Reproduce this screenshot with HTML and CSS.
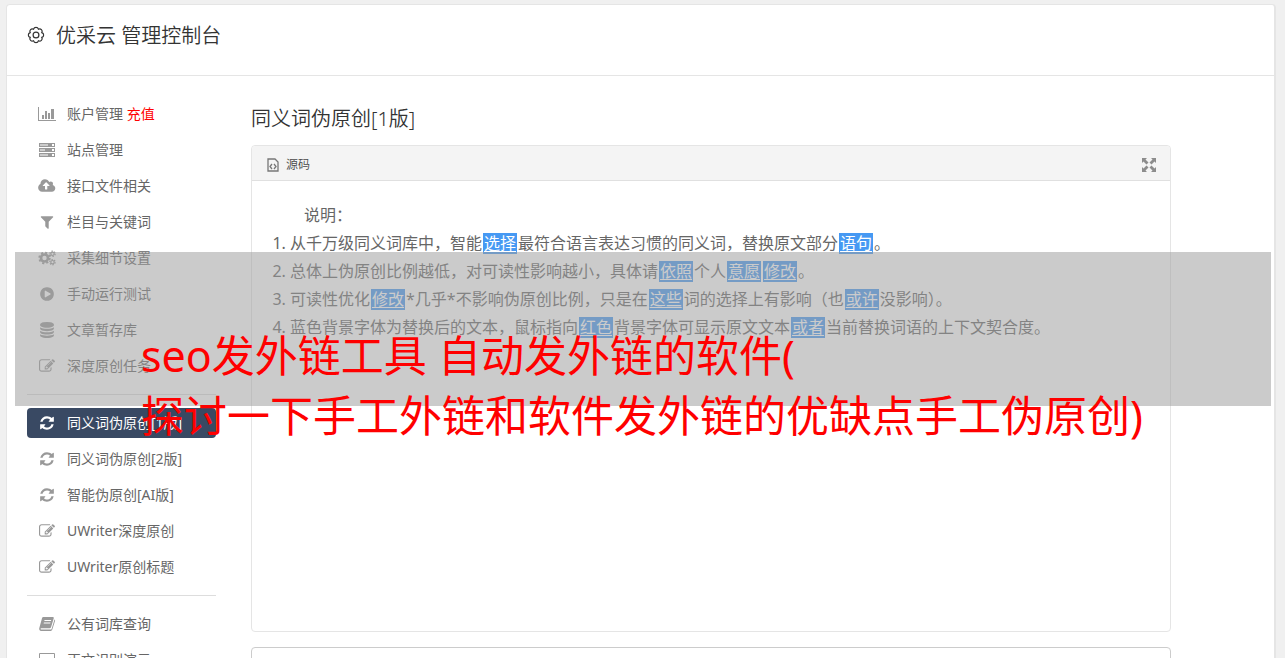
FILE: index.html
```
<!DOCTYPE html>
<html lang="zh-CN">
<head>
<meta charset="utf-8">
<title>优采云 管理控制台</title>
<link rel="stylesheet" href="styles.css">
</head>
<body>
<svg class="sprite" aria-hidden="true">
  <symbol id="chart" viewBox="0 0 18 16"><path d="M0 1h1v13h17v1H0zM4 9h2v4H4zM7 5h2v8H7zM10 7h2v6h-2zM13 3h3v10h-3z"/></symbol>
  <symbol id="server" viewBox="0 0 18 16"><path fill-rule="evenodd" d="M1 1h16v4H1zM2 2.500v1h8v-1zM14 2v2h2V2zM1 6h16v4H1zM2 7.500v1h5v-1zM14 7v2h2V7zM1 11h16v4H1zM2 12.500v1h8v-1zM14 12v2h2v-2z"/></symbol>
  <symbol id="cloud" viewBox="0 0 1856 1792"><path d="M1216 864q0-14-9-23l-352-352q-9-9-23-9t-23 9l-351 351q-10 12-10 24 0 14 9 23t23 9h224v352q0 13 9.500 22.500t22.500 9.500h192q13 0 22.500-9.500t9.500-22.500v-352h224q13 0 22.500-9.500t9.500-22.500zm640 288q0 159-112.500 271.500t-271.500 112.500h-1088q-185 0-316.500-131.500t-131.500-316.500q0-130 70-240t188-165q-2-30-2-43 0-212 150-362t362-150q156 0 285.500 87t188.500 231q71-62 166-62 106 0 181 75t75 181q0 76-41 138 130 31 213.500 135.500t83.500 238.500z"/></symbol>
  <symbol id="filter" viewBox="0 0 1792 1792"><path d="M1595 295q17 41-14 70l-493 493v742q0 42-39 59-13 5-25 5-27 0-45-19l-256-256q-19-19-19-45v-486l-493-493q-31-29-14-70 17-39 59-39h1280q42 0 59 39z"/></symbol>
  <symbol id="cogs" viewBox="0 0 18 16"><g fill="none" stroke="currentColor"><circle cx="6.500" cy="8" r="3.500" stroke-width="2.600"/><circle cx="6.500" cy="8" r="5.300" stroke-width="1.800" stroke-dasharray="2.100 2.063"/><circle cx="14.500" cy="3.800" r="1.700" stroke-width="1.200"/><circle cx="14.500" cy="3.800" r="2.700" stroke-width="1.200" stroke-dasharray="1.400 1.427"/><circle cx="14.500" cy="12.200" r="1.700" stroke-width="1.200"/><circle cx="14.500" cy="12.200" r="2.700" stroke-width="1.200" stroke-dasharray="1.400 1.427"/></g></symbol>
  <symbol id="play" viewBox="0 0 1792 1792"><path d="M896 128q209 0 385.500 103t279.500 279.500 103 385.500-103 385.500-279.500 279.500-385.500 103-385.500-103-279.500-279.500-103-385.500 103-385.500 279.500-279.500 385.500-103zm384 823q32-18 32-55t-32-55l-544-320q-31-19-64-1-32 19-32 56v640q0 37 32 56 16 8 32 8 17 0 32-9z"/></symbol>
  <symbol id="database" viewBox="0 0 1792 1792"><path d="M896 768q237 0 443-43t325-127v170q0 69-103 128t-280 93.500-385 34.500-385-34.500-280-93.500-103-128v-170q119 84 325 127t443 43zm0 768q237 0 443-43t325-127v170q0 69-103 128t-280 93.500-385 34.500-385-34.500-280-93.500-103-128v-170q119 84 325 127t443 43zm0-384q237 0 443-43t325-127v170q0 69-103 128t-280 93.500-385 34.500-385-34.500-280-93.500-103-128v-170q119 84 325 127t443 43zm0-1152q208 0 385 34.500t280 93.500 103 128v128q0 69-103 128t-280 93.500-385 34.500-385-34.500-280-93.500-103-128v-128q0-69 103-128t280-93.500 385-34.500z"/></symbol>
  <symbol id="edit" viewBox="0 0 1792 1792"><path d="M888 1184l116-116-152-152-116 116v56h96v96h56zm440-720q-16-16-33 1l-350 350q-17 17-1 33t33-1l350-350q17-17 1-33zm80 594v190q0 119-84.500 203.500t-203.500 84.500h-832q-119 0-203.500-84.500t-84.500-203.500v-832q0-119 84.500-203.500t203.500-84.500h832q63 0 117 25 15 7 18 23 3 17-9 29l-49 49q-14 14-32 8-23-6-45-6h-832q-66 0-113 47t-47 113v832q0 66 47 113t113 47h832q66 0 113-47t47-113v-126q0-13 9-22l64-64q15-15 35-7t20 29zm-96-738l288 288-672 672h-288v-288zm444 132l-92 92-288-288 92-92q28-28 68-28t68 28l152 152q28 28 28 68t-28 68z"/></symbol>
  <symbol id="refresh" viewBox="0 0 1792 1792"><path d="M1639 1056q0 5-1 7-64 268-268 434.500t-478 166.500q-146 0-282.500-55t-243.500-157l-129 129q-19 19-45 19t-45-19-19-45v-448q0-26 19-45t45-19h448q26 0 45 19t19 45-19 45l-137 137q71 66 161 102t187 36q134 0 250-65t186-179q11-17 53-117 8-23 30-23h192q13 0 22.500 9.500t9.500 22.500zm25-800v448q0 26-19 45t-45 19h-448q-26 0-45-19t-19-45 19-45l138-138q-148-137-349-137-134 0-250 65t-186 179q-11 17-53 117-8 23-30 23h-199q-13 0-22.500-9.500t-9.500-22.500v-7q65-268 270-434.500t480-166.500q146 0 284 55.500t245 156.500l130-129q19-19 45-19t45 19 19 45z"/></symbol>
  <symbol id="book" viewBox="0 0 18 16"><path fill-rule="evenodd" d="M5.500 1h9.200c.9 0 1.300.6 1 1.500l-2.700 8.700c-.2.700-.7 1-1.400 1H3.200c-.9 0-.9 1.300 0 1.300h9.600c.4 0 .7-.2.800-.6L16.500 3.400c.6.300.7.800.5 1.500l-2.700 8.600c-.3.900-1 1.500-1.900 1.500H3.200C1.700 15 .8 13.300 1.300 12L4 2.200C4.200 1.500 4.800 1 5.500 1zM6.600 4l-.3 1h6.600l.3-1zM5.900 6.500l-.3 1h6.600l.3-1z"/></symbol>
  <symbol id="desktop" viewBox="0 0 18 16"><path fill="none" stroke="currentColor" d="M1.500 1.500h15v10h-15zM9 11.500v3M5 14.500h8"/></symbol>
</svg>

<div class="page">
  <header class="page-header">
    <svg class="gear" viewBox="0 0 18 18"><path d="M14.820 6.590A2.500 2.500 0 0 1 14.820 11.410A2.500 2.500 0 0 1 11.410 14.820A2.500 2.500 0 0 1 6.590 14.820A2.500 2.500 0 0 1 3.180 11.410A2.500 2.500 0 0 1 3.180 6.590A2.500 2.500 0 0 1 6.590 3.180A2.500 2.500 0 0 1 11.410 3.180A2.500 2.500 0 0 1 14.820 6.590z"/><circle cx="9" cy="9" r="2.900"/></svg>
    <h1>优采云 管理控制台</h1>
  </header>
  <div class="content">
    <nav class="sidebar">
      <a class="item" href="#"><svg><use href="#chart"/></svg><span>账户管理 <span class="recharge">充值</span></span></a>
      <a class="item" href="#"><svg><use href="#server"/></svg>站点管理</a>
      <a class="item" href="#"><svg><use href="#cloud"/></svg>接口文件相关</a>
      <a class="item" href="#"><svg><use href="#filter"/></svg>栏目与关键词</a>
      <a class="item" href="#"><svg><use href="#cogs"/></svg>采集细节设置</a>
      <a class="item" href="#"><svg><use href="#play"/></svg>手动运行测试</a>
      <a class="item" href="#"><svg><use href="#database"/></svg>文章暂存库</a>
      <a class="item" href="#"><svg><use href="#edit"/></svg>深度原创任务</a>
      <hr>
      <a class="item active" href="#"><svg><use href="#refresh"/></svg>同义词伪原创[1版]</a>
      <a class="item" href="#"><svg><use href="#refresh"/></svg>同义词伪原创[2版]</a>
      <a class="item" href="#"><svg><use href="#refresh"/></svg>智能伪原创[AI版]</a>
      <a class="item" href="#"><svg><use href="#edit"/></svg>UWriter深度原创</a>
      <a class="item" href="#"><svg><use href="#edit"/></svg>UWriter原创标题</a>
      <hr>
      <a class="item" href="#"><svg><use href="#book"/></svg>公有词库查询</a>
      <a class="item" href="#"><svg><use href="#desktop"/></svg>正文识别演示</a>
    </nav>
    <main class="main">
      <h2>同义词伪原创[1版]</h2>
      <section class="editor">
        <div class="toolbar">
          <button type="button" class="source"><svg viewBox="0 0 12 14"><path d="M1 1h7l3 3v9H1z"/><path d="M5 6L3 8.500l2 2.500M7 6l2 2.500-2 2.500"/></svg>源码</button>
          <button type="button" class="expand" aria-label="全屏"><svg viewBox="0 0 14 14"><path d="M0 0h5L3.500 1.500l3 3-2 2-3-3L0 5zM14 0v5l-1.500-1.500-3 3-2-2 3-3L9 0zM0 14V9l1.500 1.500 3-3 2 2-3 3L5 14zM14 14H9l1.500-1.500-3-3 2-2 3 3L14 9z"/></svg></button>
        </div>
        <div class="document">
          <p>说明：</p>
          <ol>
            <li>从千万级同义词库中，智能<mark>选择</mark>最符合语言表达习惯的同义词，替换原文部分<mark>语句</mark>。</li>
            <li>总体上伪原创比例越低，对可读性影响越小，具体请<mark>依照</mark>个人<mark>意愿</mark><mark>修改</mark>。</li>
            <li>可读性优化<mark>修改</mark>*几乎*不影响伪原创比例，只是在<mark>这些</mark>词的选择上有影响（也<mark>或许</mark>没影响）。</li>
            <li>蓝色背景字体为替换后的文本，鼠标指向<mark>红色</mark>背景字体可显示原文文本<mark>或者</mark>当前替换词语的上下文契合度。</li>
          </ol>
        </div>
      </section>
      <textarea class="result" aria-label="原文"></textarea>
    </main>
  </div>
</div>
<div class="banner"><p>seo发外链工具 自动发外链的软件(<br>探讨一下手工外链和软件发外链的优缺点手工伪原创)</p></div>
</body>
</html>
```
FILE: styles.css
```
* { box-sizing: border-box; }
body {
  position: relative;
  height: 100vh;
  margin: 0;
  padding: 4px 9px 0 6px;
  overflow: hidden;
  background: #f0f0f0;
  color: #666;
  font: 14px/20px "Noto Sans", "Noto Sans CJK SC", sans-serif;
}
.sprite { position: absolute; width: 0; height: 0; }
.page {
  background: #fff;
  border: 1px solid #e5e5e5;
  border-right-width: 2px;
  border-radius: 4px 4px 0 0;
}
.page-header {
  display: flex;
  align-items: center;
  gap: 11px;
  height: 71px;
  padding: 0 20px 8px;
  border-bottom: 1px solid #e5e5e5;
}
.gear { width: 18px; height: 18px; margin-bottom: 2px; fill: none; stroke: #333; stroke-width: 1.200; }
h1, h2 { margin: 0; color: #333; font-size: 20px; font-weight: 350; line-height: 28px; }
.content {
  display: grid;
  grid-template-columns: 189px 1fr;
  gap: 35px;
  padding: 20px 103px 20px 20px;
}
.sidebar { display: flex; flex-direction: column; gap: 6px; padding-top: 3px; }
.item {
  display: flex;
  align-items: center;
  gap: 11px;
  height: 30px;
  padding: 0 11px;
  border-radius: 4px;
  color: #666;
  text-decoration: none;
  white-space: nowrap;
}
.item svg { width: 18px; height: 16px; color: #999; fill: currentColor; }
.active { background: #394963; color: #fff; }
.active svg { color: #fff; }
.recharge { color: #f00; }
.sidebar hr { width: 100%; height: 1px; margin: 7px 0; border: 0; background: #ddd; }
.main { min-width: 0; padding-top: 9px; }
.editor { margin: 12px 0 15px; border: 1px solid #e5e5e5; border-radius: 4px; }
.toolbar {
  display: flex;
  align-items: center;
  justify-content: space-between;
  height: 35px;
  padding: 3px 14px 0 15px;
  border-bottom: 1px solid #e0e0e0;
  border-radius: 4px 4px 0 0;
  background: #f4f4f4;
}
.toolbar button { display: flex; align-items: center; padding: 0; border: 0; background: none; color: #484848; font: inherit; }
.source { gap: 7px; }
.toolbar .source { font-size: 12px; font-weight: 350; }
.source svg { width: 12px; height: 14px; fill: none; stroke: #777; stroke-width: 1.300; }
.expand svg { width: 14px; height: 14px; fill: #8c8c8c; }
.document { min-height: 450px; padding: 20px; font-size: 16px; line-height: 28px; }
.document p { margin: 0; text-indent: 32px; }
.document ol { margin: 0; padding-left: 18px; }
mark {
  margin: 0 1px;
  padding: 0 1px;
  background: linear-gradient(#4699f3, #4699f3) center / 100% 21px no-repeat;
  color: #fff;
  text-decoration: underline 1px;
  text-decoration-skip-ink: none;
  text-underline-offset: 2px;
}
.result { display: block; width: 100%; height: 120px; border: 1px solid #ccc; border-radius: 4px; resize: none; }
.banner {
  position: absolute;
  top: 252px;
  right: 14px;
  left: 15px;
  height: 154px;
  padding: 74px 0 0 126px;
  background: rgba(157, 157, 157, .53);
  color: #f00;
  font-size: 43px;
  line-height: 60px;
  white-space: nowrap;
}
.banner p { margin: 0; }
```
